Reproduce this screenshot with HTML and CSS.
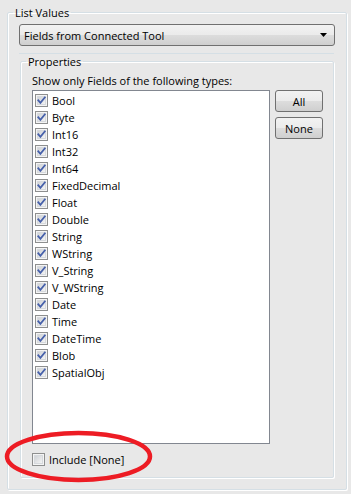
FILE: index.html
```html
<!DOCTYPE html>
<html lang="en">
<head>
    <meta charset="UTF-8">
    <meta name="viewport" content="width=device-width, initial-scale=1.0">
    <title>List Values</title>
    <link rel="stylesheet" href="styles.css">
</head>
<body>
    <svg class="defs" width="0" height="0">
        <defs>
            <linearGradient id="boxFill" x1="0" y1="0" x2="1" y2="1">
                <stop offset="0" stop-color="#cdd0d4"></stop>
                <stop offset="1" stop-color="#f6f6f6"></stop>
            </linearGradient>
        </defs>
    </svg>

    <div class="window">
        <fieldset class="group outer">
            <legend>List Values</legend>
            <div class="combo">
                <span>Fields from Connected Tool</span>
                <svg class="combo-arrow" width="7" height="4" viewBox="0 0 7 4">
                    <polygon points="0,0 7,0 3.5,4" fill="#000"></polygon>
                </svg>
            </div>
            <div class="panel">
                <fieldset class="group props">
                    <legend>Properties</legend>
                    <div class="props-body">
                        <div class="caption">Show only Fields of the following types:</div>
                        <div class="types">
                            <ul class="listbox" id="typeList"></ul>
                            <div class="buttons">
                                <button class="btn">All</button>
                                <button class="btn">None</button>
                            </div>
                        </div>
                        <label class="include">
                            <span class="check" id="includeBox"></span>
                            Include [None]
                        </label>
                    </div>
                </fieldset>
            </div>
        </fieldset>

        <!-- red marker drawn over the screenshot -->
        <svg class="marker" width="152" height="56" viewBox="0 0 152 56">
            <ellipse cx="75.5" cy="27.5" rx="71.5" ry="23.5" fill="none" stroke="#ed1c24" stroke-width="4.5"></ellipse>
        </svg>
    </div>

    <script>
        const types = [
            'Bool', 'Byte', 'Int16', 'Int32', 'Int64', 'FixedDecimal', 'Float',
            'Double', 'String', 'WString', 'V_String', 'V_WString', 'Date',
            'Time', 'DateTime', 'Blob', 'SpatialObj'
        ];

        function checkBox(checked) {
            const mark = checked
                ? '<path d="M3.3 6.3 L5.4 8.8 L9.8 3.4" fill="none" stroke="#4660aa" stroke-width="1.8" stroke-linecap="square"></path>'
                : '';
            return `
                <svg width="13" height="13" viewBox="0 0 13 13">
                    <rect x="0.5" y="0.5" width="12" height="12" fill="#f4f4f4" stroke="#8e8f8f"></rect>
                    <rect x="2.5" y="2.5" width="8" height="8" fill="url(#boxFill)" stroke="#d6d9dd"></rect>
                    ${mark}
                </svg>`;
        }

        const typeList = document.getElementById('typeList');
        types.forEach(name => {
            const li = document.createElement('li');
            li.className = 'item';
            li.innerHTML = `<span class="check">${checkBox(true)}</span><span>${name}</span>`;
            typeList.appendChild(li);
        });

        document.getElementById('includeBox').innerHTML = checkBox(false);
    </script>
</body>
</html>
```

FILE: styles.css
```css
* {
    box-sizing: border-box;
    margin: 0;
    padding: 0;
}

body {
    background-color: #e8e8e8;
    font-family: 'Open Sans', 'Noto Sans', sans-serif;
    font-size: 11px;
    color: #000;
}

.defs {
    position: absolute;
}

.window {
    position: relative;
    padding: 5px 0 0 7px;
    height: 494px;
}

.group {
    border: 1px solid #d5dfe5;
    box-shadow: inset 1px 1px 0 #fff, 1px 1px 0 #fff;
    border-radius: 2px;
}

.group legend {
    margin-left: 5px;
    padding: 0 2px;
    line-height: 15px;
}

.outer {
    width: 340px;
    height: 485px;
}

.combo {
    display: flex;
    align-items: center;
    justify-content: space-between;
    width: 316px;
    height: 22px;
    margin: 4px 0 0 11px;
    padding: 0 4px 0 4px;
    border: 1px solid #707070;
    border-radius: 3px;
    background: linear-gradient(#f2f2f2 0%, #ebebeb 50%, #dddddd 50%, #cfcfcf 100%);
}

.combo-arrow {
    margin-right: 3px;
}

.panel {
    width: 315px;
    margin: 7px 0 0 11px;
    border-top: 1px solid #d5dfe5;
}

.props {
    width: 314px;
    height: 424px;
    margin-left: 1px;
}

.props-body {
    padding-left: 11px;
}

.caption {
    line-height: 15px;
    margin-top: 4px;
}

.types {
    display: flex;
    align-items: flex-start;
    margin-top: 2px;
}

.listbox {
    list-style: none;
    width: 238px;
    height: 354px;
    padding: 1px 0 0 2px;
    border: 1px solid #828790;
    background: #fff;
}

.item {
    display: flex;
    align-items: center;
    height: 17px;
    gap: 4px;
}

.check {
    display: flex;
    width: 13px;
    height: 13px;
}

.buttons {
    display: flex;
    flex-direction: column;
    gap: 5px;
    margin-left: 5px;
}

.btn {
    width: 48px;
    height: 22px;
    font: inherit;
    color: #000;
    border: 1px solid #707070;
    border-radius: 3px;
    background: linear-gradient(#f2f2f2 0%, #ebebeb 50%, #dddddd 50%, #cfcfcf 100%);
}

.include {
    display: flex;
    align-items: center;
    gap: 4px;
    height: 17px;
    margin-top: 7px;
}

.marker {
    position: absolute;
    left: 3px;
    top: 429px;
}
```
